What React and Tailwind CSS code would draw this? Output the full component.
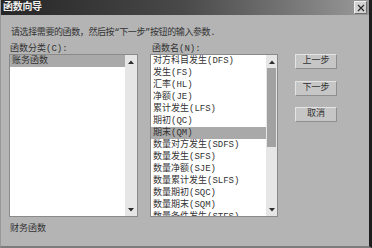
import React from 'react';

// 函数向导 dialog, grey scan look

const FONT = { fontFamily: '"Liberation Mono", "Noto Sans CJK SC", monospace' };

const funcs = [
  '对方科目发生(DFS)',
  '发生(FS)',
  '汇率(HL)',
  '净额(JE)',
  '累计发生(LFS)',
  '期初(QC)',
  '期末(QM)',
  '数量对方发生(SDFS)',
  '数量发生(SFS)',
  '数量净额(SJE)',
  '数量累计发生(SLFS)',
  '数量期初(SQC)',
  '数量期末(SQM)',
  '数量条件发生(STFS)',
];

const ArrowUp = () => (
  <svg width="6" height="4" viewBox="0 0 6 4"><path d="M0 4 L3 0.5 L6 4 Z" fill="#2e2e2e" /></svg>
);
const ArrowDown = () => (
  <svg width="6" height="4" viewBox="0 0 6 4"><path d="M0 0 L6 0 L3 3.5 Z" fill="#2e2e2e" /></svg>
);

const ScrollBar = ({ width, thumb }) => (
  <div className={`${width} h-full bg-[#e6e6e6] flex flex-col shrink-0`}>
    <div className="h-[13px] flex items-center justify-center shrink-0"><ArrowUp /></div>
    <div className="flex-1 flex flex-col">
      {thumb && <div className="h-[79px] bg-[#a2a2a2] mx-[1px]" />}
    </div>
    <div className="h-[13px] flex items-center justify-center shrink-0"><ArrowDown /></div>
  </div>
);

const Btn = ({ children, className = '' }) => (
  <div className={`w-[42px] h-[15px] flex items-center justify-center bg-[#c6c6c6] border border-t-[#e4e4e4] border-l-[#e4e4e4] border-r-[#8e8e8e] border-b-[#8e8e8e] text-[9px] leading-none text-[#333] ${className}`}>
    {children}
  </div>
);

export default function App() {
  return (
    <div
      style={FONT}
      className="w-[372px] h-[248px] bg-[#b4b4b4] flex flex-col overflow-hidden border-l border-l-[#989898] border-r-[3px] border-r-[#1e1e1e] border-b-2 border-b-[#7c7c7c] text-[#333]"
    >
      {/* title bar */}
      <div className="h-[15px] shrink-0 flex items-center justify-between pl-[2px] pr-[2px] bg-gradient-to-r from-[#262626] via-[#4a4a4a] to-[#9a9a9a]">
        <span className="text-[10px] font-bold text-[#f0f0f0] leading-none tracking-[-0.3px]">函数向导</span>
        <div className="w-[13px] h-[13px] bg-[#d2d2d2] border border-t-[#f0f0f0] border-l-[#f0f0f0] border-r-[#6e6e6e] border-b-[#6e6e6e] flex items-center justify-center">
          <svg width="8" height="8" viewBox="0 0 8 8">
            <path d="M1 1 L7 7 M7 1 L1 7" stroke="#2a2a2a" strokeWidth="1.2" />
          </svg>
        </div>
      </div>

      <div className="flex-1 flex flex-col pl-[8px]">
        <div className="mt-[12px] h-[12px] leading-[12px] text-[9px] pl-[2px] whitespace-nowrap tracking-[-0.4px]">
          请选择需要的函数，然后按“下一步”按钮的输入参数.
        </div>

        <div className="mt-[5px] flex items-start">
          {/* 分类 */}
          <div className="w-[129px] flex flex-col">
            <div className="h-[10px] leading-[10px] text-[9px] pl-[1px]">函数分类(C):</div>
            <div className="h-[163px] bg-white border border-[#8a8a8a] flex">
              <div className="flex-1 flex flex-col">
                <div className="h-[12px] leading-[12px] bg-[#a9a9a9] pl-[2px] text-[9px]">账务函数</div>
              </div>
              <ScrollBar width="w-[12px]" />
            </div>
            <div className="mt-[6px] h-[12px] leading-[12px] text-[9px] pl-[1px]">财务函数</div>
          </div>

          {/* 函数名 */}
          <div className="ml-[12px] w-[128px] flex flex-col">
            <div className="h-[10px] leading-[10px] text-[9px] pl-[2px]">函数名(N):</div>
            <div className="h-[163px] bg-white border border-[#8a8a8a] flex">
              <div className="flex-1 flex flex-col overflow-hidden">
                {funcs.map((f, i) => (
                  <div
                    key={f}
                    className={`h-[12px] shrink-0 leading-[12px] pl-[2px] text-[9px] whitespace-nowrap ${i === 6 ? 'bg-[#a9a9a9]' : ''}`}
                  >
                    {f}
                  </div>
                ))}
              </div>
              <ScrollBar width="w-[11px]" thumb />
            </div>
          </div>

          {/* buttons */}
          <div className="ml-[17px] pt-[10px] flex flex-col">
            <Btn>上一步</Btn>
            <Btn className="mt-[12px]">下一步</Btn>
            <Btn className="mt-[11px]">取消</Btn>
          </div>
        </div>
      </div>
    </div>
  );
}
